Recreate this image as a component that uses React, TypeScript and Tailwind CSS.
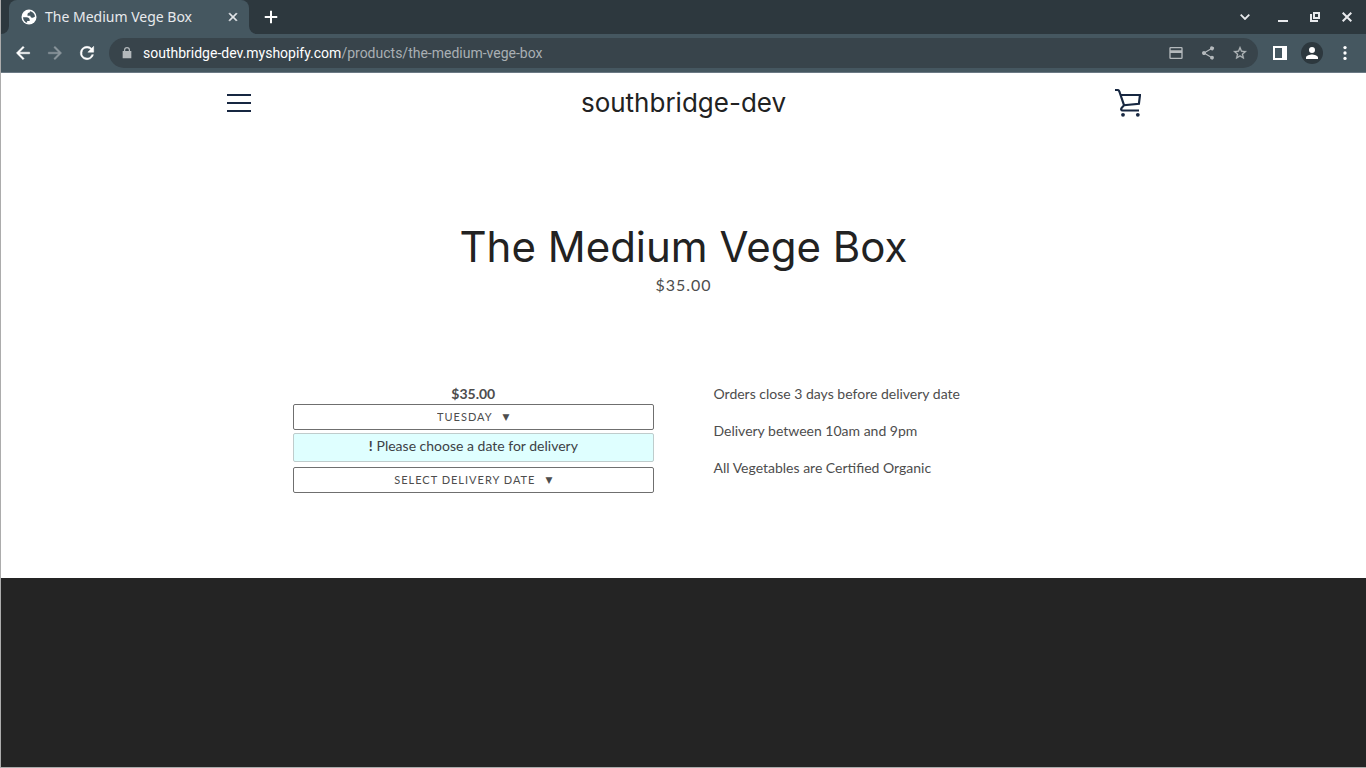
import type { ReactNode } from "react";

function Icon({ children, className = "size-5" }: { children: ReactNode; className?: string }) {
  return (
    <svg viewBox="0 0 24 24" fill="currentColor" aria-hidden="true" className={className}>
      {children}
    </svg>
  );
}

function IconButton({ label, className = "justify-center", children }: { label: string; className?: string; children: ReactNode }) {
  return (
    <button type="button" aria-label={label} className={`flex shrink-0 items-center ${className}`}>
      {children}
    </button>
  );
}

function TabStrip() {
  return (
    <div className="flex h-[34px] items-center bg-[#2d383e] text-[#e8eaed]">
      <div className="h-full w-2 bg-[#455760]">
        <div className="h-full rounded-br-lg bg-[#2d383e]" />
      </div>
      <div className="flex h-full w-60 items-center rounded-t-lg bg-[#455760] pl-[11px] pr-2">
        <Icon className="size-[18px] shrink-0 text-white">
          <circle cx="12" cy="12" r="10" />
          <path
            fill="#455760"
            d="M4 12.200h4.400c3.400 0 4.900 1.700 4.500 5H9.500v2.600c-3.200-.9-5.300-4-5.500-7.600zM13.700 4.200c3.600.8 6.200 3.800 6.300 7.200-.8 1-1.700 1.500-3 1.500-2.100 0-3.200-.9-3.200-2.700H10c-.3-2.700.700-4.100 2.900-4.100 0-.9.3-1.500.8-1.900z"
          />
        </Icon>
        <span className="ml-[7px] grow text-sm">The Medium Vege Box</span>
        <IconButton label="Close tab" className="size-4 justify-center">
          <Icon className="size-3.5">
            <path d="M19 6.400 17.600 5 12 10.600 6.400 5 5 6.400l5.600 5.600L5 17.600 6.400 19l5.600-5.600 5.600 5.600 1.400-1.400-5.600-5.600z" stroke="currentColor" />
          </Icon>
        </IconButton>
      </div>
      <div className="h-full w-2 bg-[#455760]">
        <div className="h-full rounded-bl-lg bg-[#2d383e]" />
      </div>
      <IconButton label="New tab" className="size-7 justify-center text-white">
        <Icon>
          <path d="M19.500 13.200h-6.300v6.300h-2.400v-6.300H4.500v-2.400h6.300V4.500h2.400v6.300h6.300z" />
        </Icon>
      </IconButton>
      <div className="ml-auto flex items-center gap-3 pr-[9px]">
        <IconButton label="Search tabs" className="mr-1 size-6 justify-center">
          <svg viewBox="0 0 10 6" className="h-1.5 w-2.5" fill="none" stroke="currentColor" strokeWidth="1.8" aria-hidden="true">
            <path d="m.7.700 4.300 4.300L9.300.7" />
          </svg>
        </IconButton>
        <IconButton label="Minimize" className="size-5 justify-center">
          <svg viewBox="0 0 10 10" className="size-2.5" aria-hidden="true">
            <path d="M0 8h10v2H0z" fill="currentColor" />
          </svg>
        </IconButton>
        <IconButton label="Restore" className="size-5 justify-center">
          <svg viewBox="0 0 10 10" className="size-2.5" fill="none" stroke="currentColor" strokeWidth="2" shapeRendering="crispEdges" aria-hidden="true">
            <path d="M4 1h5v5H4z M1 2v7h7" />
          </svg>
        </IconButton>
        <IconButton label="Close window" className="size-5 justify-center">
          <svg viewBox="0 0 10 10" className="size-2.5" fill="none" stroke="currentColor" strokeWidth="2" aria-hidden="true">
            <path d="m.7.700 8.600 8.600M9.300.7.700 9.300" />
          </svg>
        </IconButton>
      </div>
    </div>
  );
}

function Toolbar() {
  return (
    <div className="flex h-[39px] items-center border-b border-[#6b7984] bg-[#455760] pl-3 pr-[11px] text-white">
      <IconButton label="Back" className="mr-3 size-5 justify-center">
        <Icon>
          <path d="M20 11H7.830l5.590-5.590L12 4l-8 8 8 8 1.410-1.410L7.830 13H20z" stroke="currentColor" strokeWidth=".5" />
        </Icon>
      </IconButton>
      <IconButton label="Forward" className="mr-3 size-5 justify-center text-[#8b969c]">
        <Icon>
          <path d="m12 4-1.410 1.410L16.170 11H4v2h12.170l-5.580 5.590L12 20l8-8z" stroke="currentColor" strokeWidth=".5" />
        </Icon>
      </IconButton>
      <IconButton label="Reload" className="mr-3 size-5 justify-center">
        <Icon>
          <path d="M17.650 6.350A7.958 7.958 0 0 0 12 4a8 8 0 1 0 7.730 10h-2.080A6 6 0 1 1 12 6c1.660 0 3.140.690 4.220 1.780L13 11h7V4z" stroke="currentColor" strokeWidth=".6" />
        </Icon>
      </IconButton>
      <form className="flex h-[30px] min-w-0 grow items-center rounded-full bg-[#38444b] pl-2.5 pr-2 font-['Roboto',sans-serif] text-sm">
        <Icon className="mr-2 size-4 shrink-0 text-[#b4b9bc]">
          <path d="M16.500 9V7.500a4.500 4.500 0 0 0-9 0V9H5.500v11h13V9zM9.300 7.500a2.700 2.700 0 0 1 5.400 0V9H9.300z" />
        </Icon>
        <input
          aria-label="Address"
          defaultValue="southbridge-dev.myshopify.com"
          className="bg-transparent text-white outline-none [field-sizing:content]"
        />
        <span className="grow truncate text-[#a9afb3]">/products/the-medium-vege-box</span>
        <div className="flex items-center gap-3 text-[#b4b9bc]">
          <IconButton label="Payment methods" className="size-5 justify-center">
            <Icon className="size-4">
              <path d="M20 3H4a2 2 0 0 0-2 2v14a2 2 0 0 0 2 2h16a2 2 0 0 0 2-2V5a2 2 0 0 0-2-2zm0 16H4v-7h16zm0-11H4V5h16z" />
            </Icon>
          </IconButton>
          <IconButton label="Share" className="size-5 justify-center">
            <Icon className="size-4">
              <path d="M18 16.080c-.760 0-1.440.300-1.960.770L8.910 12.700a3.300 3.300 0 0 0 0-1.400l7.050-4.110A3 3 0 1 0 15 5c0 .240.040.470.090.700L8.040 9.810a3 3 0 1 0 0 4.380l7.120 4.160A2.920 2.920 0 1 0 18 16.080z" />
            </Icon>
          </IconButton>
          <IconButton label="Bookmark this page" className="size-5 justify-center">
            <Icon className="size-4">
              <path d="m22 9.240-7.190-.620L12 2 9.190 8.630 2 9.240l5.460 4.730L5.820 21 12 17.270 18.180 21l-1.630-7.030zM12 15.400l-3.760 2.270 1-4.280-3.320-2.880 4.380-.380L12 6.100l1.710 4.040 4.380.380-3.320 2.880 1 4.280z" stroke="currentColor" strokeWidth=".4" />
            </Icon>
          </IconButton>
        </div>
      </form>
      <IconButton label="Side panel" className="ml-3 size-5 justify-center">
        <svg viewBox="0 0 14 14" className="size-3.5" aria-hidden="true">
          <path fillRule="evenodd" fill="currentColor" d="M0 0h14v14H0zM2 2v10h7V2z" />
        </svg>
      </IconButton>
      <IconButton label="Profile" className="ml-[11px] size-[22px] justify-center rounded-full bg-[#2d383e]">
        <Icon className="size-[18px]">
          <path d="M12 12a4 4 0 1 0 0-8 4 4 0 0 0 0 8zm0 2c-2.670 0-8 1.340-8 4v2h16v-2c0-2.660-5.330-4-8-4z" />
        </Icon>
      </IconButton>
      <IconButton label="Browser menu" className="ml-3 size-5 justify-center">
        <Icon className="size-5">
          <circle cx="12" cy="5.500" r="2" />
          <circle cx="12" cy="12" r="2" />
          <circle cx="12" cy="18.500" r="2" />
        </Icon>
      </IconButton>
    </div>
  );
}

function DropDown({ label, options }: { label: string; options: string[] }) {
  return (
    <div className="flex h-[26px] items-center justify-center gap-2.5 rounded-xs border border-[#6f6f6f] text-[11px] text-[#4d4d4d]">
      <select aria-label={label} className="appearance-none bg-transparent uppercase tracking-[1px] outline-none [field-sizing:content]">
        {options.map((option) => (
          <option key={option}>{option}</option>
        ))}
      </select>
      <span aria-hidden="true" className="font-['DejaVu_Sans',sans-serif] text-[9px]">▼</span>
    </div>
  );
}

export default function App() {
  return (
    <div className="flex min-h-screen flex-col border-b border-l border-[#acacac] bg-white font-['Lato',sans-serif]">
      <div className="font-['Noto_Sans',sans-serif]">
        <TabStrip />
        <Toolbar />
      </div>

      <header className="mx-auto flex h-[60px] w-full max-w-[914px] items-center justify-between text-[#172741]">
        <IconButton label="Menu" className="w-7 justify-start">
          <svg viewBox="0 0 24 18" className="h-[18px] w-6" fill="currentColor" aria-hidden="true">
            <path d="M0 0h24v2H0zM0 8h24v2H0zM0 16h24v2H0z" />
          </svg>
        </IconButton>
        <a href="#" className="font-['Inter',sans-serif] text-[26px] leading-9 text-[#222]">southbridge-dev</a>
        <IconButton label="Cart">
          <svg viewBox="0 0 28 28" className="size-7" fill="none" stroke="currentColor" strokeWidth="2.200" aria-hidden="true">
            <path d="M2 1h2.500C6 1 6.200 2.200 6.700 3.500L11 16.200M7.300 6h19.700l-1.100 8.800L11 16.200 8.700 18.800c-1 1.500-.5 2.700.9 2.700H26" />
            <circle cx="10" cy="25.800" r="1.900" fill="currentColor" stroke="none" />
            <circle cx="24.800" cy="25.800" r="1.900" fill="currentColor" stroke="none" />
          </svg>
        </IconButton>
      </header>

      <main className="px-6 pb-[85px] pt-[88px]">
        <div className="text-center">
          <h1 className="font-['Inter',sans-serif] text-[42px] leading-[52px] text-[#222]">The Medium Vege Box</h1>
          <p className="text-base leading-6 tracking-[1px] text-[#4d4d4d]">$35.00</p>
        </div>
        <div className="mx-auto mt-[88px] grid max-w-[781px] grid-cols-2 gap-[60px] text-sm text-[#4d4d4d]">
          <form>
            <p className="pb-[1px] text-center font-bold leading-[18px]">$35.00</p>
            <DropDown label="Delivery day" options={["Tuesday"]} />
            <p className="mb-[5px] mt-[3px] flex h-[29px] items-center justify-center gap-1 rounded-xs border border-[#bfcccc] bg-[#dfffff] pb-[3px] text-[#3d4246]">
              <b>!</b> Please choose a date for delivery
            </p>
            <DropDown label="Delivery date" options={["Select delivery date"]} />
          </form>
          <div className="space-y-[19px] leading-[18px]">
            <p>Orders close 3 days before delivery date</p>
            <p>Delivery between 10am and 9pm</p>
            <p>All Vegetables are Certified Organic</p>
          </div>
        </div>
      </main>

      <footer className="grow bg-[#242424]" />
    </div>
  );
}
